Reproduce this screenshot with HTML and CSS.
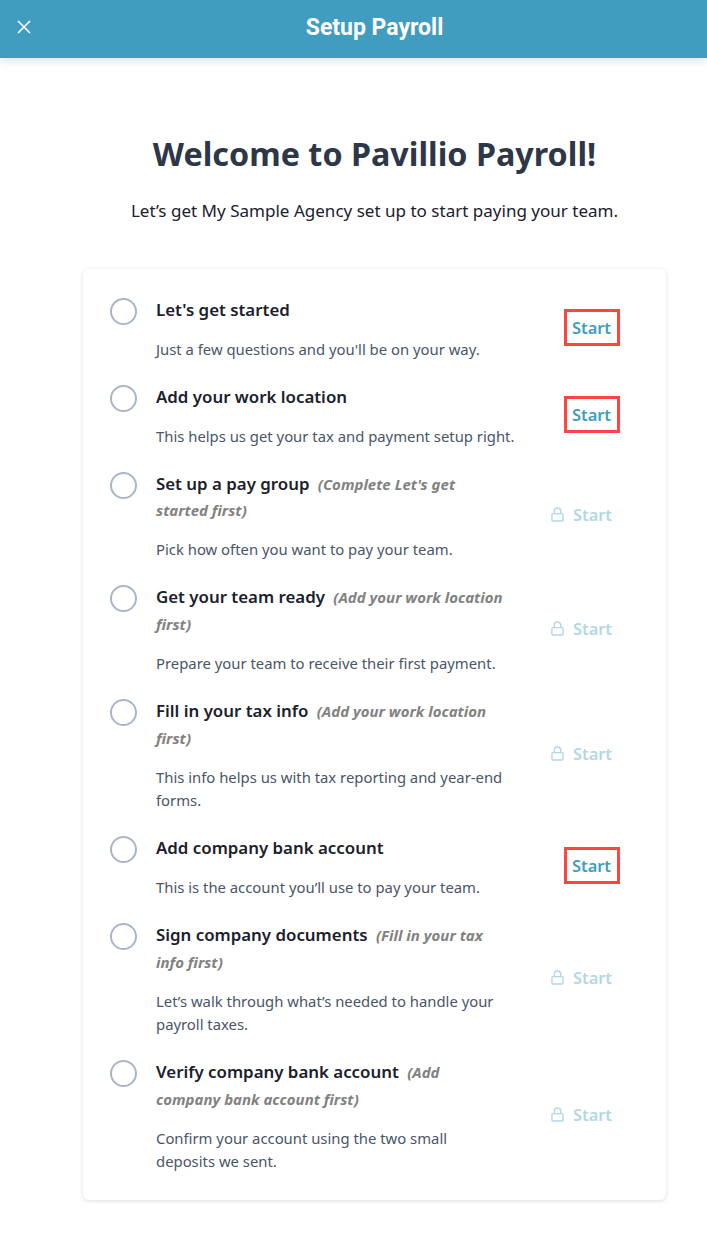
FILE: index.html
```html
<!DOCTYPE html>
<html lang="en">
<head>
<meta charset="utf-8">
<title>Setup Payroll</title>
<link rel="stylesheet" href="styles.css">
</head>
<body>
<header class="topbar">
  <svg class="close" viewBox="0 0 14 14" width="14" height="14"><path d="M1 1 13 13M13 1 1 13" stroke="#fff" stroke-width="1.6" fill="none"/></svg>
  <span class="topbar-title">Setup Payroll</span>
</header>
<main class="main">
  <h1 class="welcome">Welcome to Pavillio Payroll!</h1>
  <p class="lead">Let’s get My Sample Agency set up to start paying your team.</p>
  <section class="card">
    <div class="row">
      <span class="circle"></span>
      <div class="text">
        <div class="title">Let's get started</div>
        <div class="desc">Just a few questions and you'll be on your way.</div>
      </div>
      <div class="action"><a class="start boxed">Start</a></div>
    </div>
    <div class="row">
      <span class="circle"></span>
      <div class="text">
        <div class="title">Add your work location</div>
        <div class="desc">This helps us get your tax and payment setup right.</div>
      </div>
      <div class="action"><a class="start boxed">Start</a></div>
    </div>
    <div class="row">
      <span class="circle"></span>
      <div class="text">
        <div class="title">Set up a pay group <em class="hint">(Complete Let's get started first)</em></div>
        <div class="desc">Pick how often you want to pay your team.</div>
      </div>
      <div class="action"><a class="start locked"><svg class="lock" viewBox="0 0 14 16" width="13" height="15"><path d="M3.5 7V4.5a3.5 3.5 0 0 1 7 0V7M2 7h10a1 1 0 0 1 1 1v6a1 1 0 0 1-1 1H2a1 1 0 0 1-1-1V8a1 1 0 0 1 1-1Z" fill="none" stroke="currentColor" stroke-width="1.5"/></svg>Start</a></div>
    </div>
    <div class="row">
      <span class="circle"></span>
      <div class="text">
        <div class="title">Get your team ready <em class="hint">(Add your work location first)</em></div>
        <div class="desc">Prepare your team to receive their first payment.</div>
      </div>
      <div class="action"><a class="start locked"><svg class="lock" viewBox="0 0 14 16" width="13" height="15"><path d="M3.5 7V4.5a3.5 3.5 0 0 1 7 0V7M2 7h10a1 1 0 0 1 1 1v6a1 1 0 0 1-1 1H2a1 1 0 0 1-1-1V8a1 1 0 0 1 1-1Z" fill="none" stroke="currentColor" stroke-width="1.5"/></svg>Start</a></div>
    </div>
    <div class="row">
      <span class="circle"></span>
      <div class="text">
        <div class="title">Fill in your tax info <em class="hint">(Add your work location first)</em></div>
        <div class="desc">This info helps us with tax reporting and year-end<br>forms.</div>
      </div>
      <div class="action"><a class="start locked"><svg class="lock" viewBox="0 0 14 16" width="13" height="15"><path d="M3.5 7V4.5a3.5 3.5 0 0 1 7 0V7M2 7h10a1 1 0 0 1 1 1v6a1 1 0 0 1-1 1H2a1 1 0 0 1-1-1V8a1 1 0 0 1 1-1Z" fill="none" stroke="currentColor" stroke-width="1.5"/></svg>Start</a></div>
    </div>
    <div class="row">
      <span class="circle"></span>
      <div class="text">
        <div class="title">Add company bank account</div>
        <div class="desc">This is the account you’ll use to pay your team.</div>
      </div>
      <div class="action"><a class="start boxed">Start</a></div>
    </div>
    <div class="row">
      <span class="circle"></span>
      <div class="text">
        <div class="title">Sign company documents <em class="hint">(Fill in your tax info first)</em></div>
        <div class="desc">Let’s walk through what’s needed to handle your<br>payroll taxes.</div>
      </div>
      <div class="action"><a class="start locked"><svg class="lock" viewBox="0 0 14 16" width="13" height="15"><path d="M3.5 7V4.5a3.5 3.5 0 0 1 7 0V7M2 7h10a1 1 0 0 1 1 1v6a1 1 0 0 1-1 1H2a1 1 0 0 1-1-1V8a1 1 0 0 1 1-1Z" fill="none" stroke="currentColor" stroke-width="1.5"/></svg>Start</a></div>
    </div>
    <div class="row">
      <span class="circle"></span>
      <div class="text">
        <div class="title">Verify company bank account <em class="hint">(Add company bank account first)</em></div>
        <div class="desc">Confirm your account using the two small<br>deposits we sent.</div>
      </div>
      <div class="action"><a class="start locked"><svg class="lock" viewBox="0 0 14 16" width="13" height="15"><path d="M3.5 7V4.5a3.5 3.5 0 0 1 7 0V7M2 7h10a1 1 0 0 1 1 1v6a1 1 0 0 1-1 1H2a1 1 0 0 1-1-1V8a1 1 0 0 1 1-1Z" fill="none" stroke="currentColor" stroke-width="1.5"/></svg>Start</a></div>
    </div>
  </section>
</main>
</body>
</html>
```
FILE: styles.css
```css
* { box-sizing: border-box; }
html, body { margin: 0; padding: 0; background: #fff; }
body { font-family: "Noto Sans", "Open Sans", sans-serif; color: #2d3748; }
.topbar {
  position: relative;
  height: 58px;
  padding: 0 0 0 42px;
  background: #409dbf;
  box-shadow: 0 2px 10px rgba(0,0,0,.14);
  display: flex;
  align-items: center;
  justify-content: center;
}
.close { position: absolute; left: 17px; top: 20px; }
.topbar-title { font-family: Roboto, sans-serif; font-weight: 700; font-size: 23px; color: #fff; margin-top: -3px; }
.main { padding: 0 41px 38px 83px; }
.welcome { margin: 0; padding-top: 72px; font-size: 32.3px; line-height: 46px; font-weight: 700; color: #2d3748; text-align: center; }
.lead { margin: 0; padding-top: 23px; font-size: 17.05px; line-height: 24px; color: #1a202c; text-align: center; }
.card {
  margin-top: 46px;
  padding: 16px 0;
  width: 583px;
  background: #fff;
  border-radius: 6px;
  box-shadow: 0 1px 4px rgba(0,0,0,.14);
}
.row { display: flex; padding: 12px 0 10.5px 27px; }
.circle { flex: none; width: 27px; height: 27px; margin-top: 1px; border: 2px solid #a9b5c8; border-radius: 50%; }
.text { flex: none; width: 364px; margin-left: 19px; }
.title { width: 350px; font-size: 16.85px; line-height: 26.7px; font-weight: 600; color: #1a202c; }
.hint { font-size: 15px; font-weight: 700; font-style: italic; color: #828282; margin-left: 4px; }
.desc { margin-top: 14.2px; font-size: 14.85px; line-height: 23.5px; color: #4a5568; }
.action { flex: 1; display: flex; align-items: center; padding-bottom: 3px; }
.start { font-size: 16.4px; line-height: 25px; font-weight: 600; color: #409dbf; display: flex; align-items: center; }
.boxed { margin-left: 43.5px; padding: 3px 5.5px; border: 3px solid #ff4444; }
.locked { color: #b3d8e5; margin-left: 31px; }
.lock { margin-right: 9px; }
```
